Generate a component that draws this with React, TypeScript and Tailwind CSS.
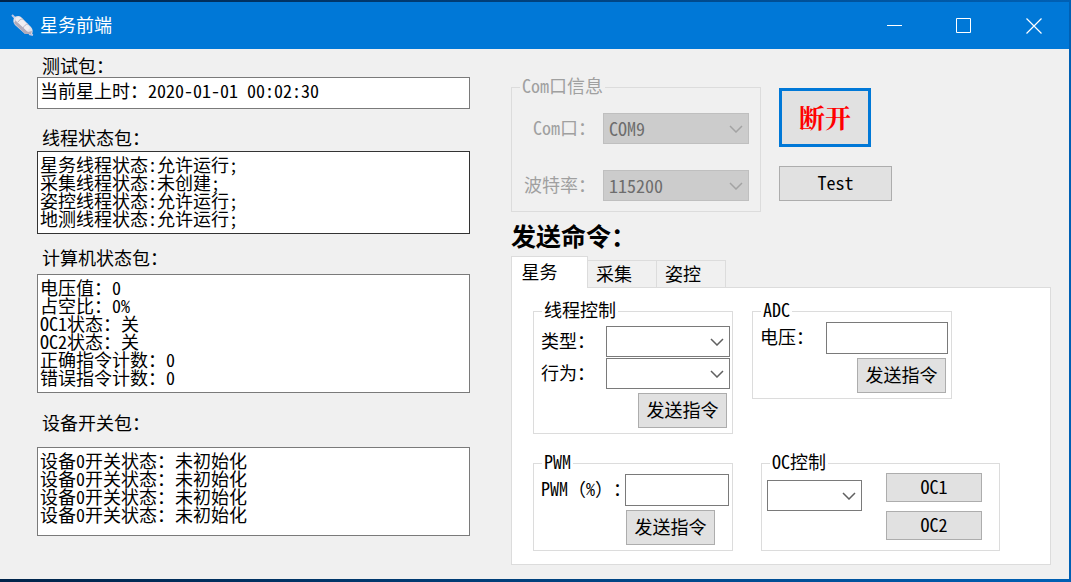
import { useState } from "react";
import type { ReactNode } from "react";

const threadStatus = [
  "星务线程状态:允许运行;",
  "采集线程状态:未创建;",
  "姿控线程状态:允许运行;",
  "地测线程状态:允许运行;",
].join("\n");

const computerStatus = [
  "电压值：0",
  "占空比：0%",
  "OC1状态：关",
  "OC2状态：关",
  "正确指令计数：0",
  "错误指令计数：0",
].join("\n");

const deviceStatus = Array(4).fill("设备0开关状态：未初始化").join("\n");

function AppIcon() {
  return (
    <svg viewBox="0 0 24 24" className="size-6" aria-hidden="true">
      <path d="m1 1 4 4M18 20l4 1" stroke="#b9c6e6" strokeWidth="2" />
      <path d="M3 4c1-2 5-3 7-1l10 10c2 2 2 5 1 7H14L4 11C2 9 2 6 3 4Z" fill="#e2e0e8" />
      <path d="M3 9 14 20h6l1-3-4 1L5 6Z" fill="#9c94a8" opacity=".7" />
      <path d="M5 4c1-1 3-1 5 0l9 10-3 3L5 7Z" fill="#efedf2" />
      <path d="M7 8c1-2 3-3 5-3M12 14c1-2 3-4 5-4" stroke="#b9b4c2" strokeWidth="1" fill="none" />
    </svg>
  );
}

function Combo({
  id,
  label,
  value,
  options = [],
  disabled,
  className,
}: {
  id: string;
  label?: string;
  value?: string;
  options?: string[];
  disabled?: boolean;
  className: string;
}) {
  return (
    <div className={"relative " + className}>
      <select
        id={id}
        aria-label={label}
        defaultValue={value ?? ""}
        disabled={disabled}
        className="block h-[31px] w-full appearance-none border border-[#7a7a7a] bg-white pr-6 pb-0.5 pl-[5px] text-[18px] leading-5 disabled:border-[#bfbfbf] disabled:bg-[#cccccc] disabled:text-[#6d6d6d] disabled:opacity-100"
      >
        {value === undefined && <option value="" />}
        {value !== undefined && <option>{value}</option>}
        {options.map((o) => (
          <option key={o}>{o}</option>
        ))}
      </select>
      <svg
        viewBox="0 0 14 8"
        className={
          "pointer-events-none absolute top-3 right-1.5 h-2 w-3.5 " +
          (disabled ? "text-[#a3a3a3]" : "text-[#606060]")
        }
        aria-hidden="true"
      >
        <path d="m1 1 6 6 6-6" fill="none" stroke="currentColor" strokeWidth="1.5" />
      </svg>
    </div>
  );
}

function Group({
  title,
  className,
  disabled,
  children,
}: {
  title: string;
  className: string;
  disabled?: boolean;
  children: ReactNode;
}) {
  return (
    <fieldset disabled={disabled} className={"border border-[#dcdcdc] " + className}>
      <legend className="ml-2 px-0.5 pb-1 leading-4">{title}</legend>
      {children}
    </fieldset>
  );
}

function PushButton({ className, children }: { className: string; children: ReactNode }) {
  return (
    <button type="button" className={"border border-[#adadad] bg-[#e1e1e1] pb-1 leading-5 " + className}>
      {children}
    </button>
  );
}

const boxClass =
  "block w-full resize-none overflow-hidden border bg-white px-0.5 leading-[18px] outline-none";
const captionClass = "block pb-0.5 pl-[5px] leading-[18px]";
const rowLabelClass = "pb-1 leading-5 whitespace-nowrap";
const fieldClass = "h-8 min-w-0 border border-[#7a7a7a] bg-white px-1 outline-none";

export default function App() {
  const tabs = ["星务", "采集", "姿控"];
  const [active, setActive] = useState(0);

  return (
    <div className="flex min-h-screen flex-col bg-linear-to-r from-[#00244a] to-[#0060b4] pt-0.5 pr-0.5 pb-[3px] font-['Noto_Sans_Mono_CJK_SC','Noto_Sans_CJK_SC',monospace] text-[18px] text-black [text-spacing-trim:space-all]">
      <header className="flex h-[47px] shrink-0 items-center bg-[#0078d7] pl-[11px] text-white">
        <AppIcon />
        <h1 className="ml-[5px] flex-1 pb-0.5 font-['Noto_Sans_CJK_SC',sans-serif] text-[18px] font-normal">星务前端</h1>
        <button type="button" aria-label="最小化" className="flex h-full w-[69px] items-center justify-center">
          <svg viewBox="0 0 16 16" className="size-4" aria-hidden="true">
            <path d="M0 7.5h15" stroke="currentColor" fill="none" />
          </svg>
        </button>
        <button type="button" aria-label="最大化" className="flex h-full w-[69px] items-center justify-center">
          <svg viewBox="0 0 16 16" className="size-4" aria-hidden="true">
            <path d="M.5.5h14v14H.5z" stroke="currentColor" fill="none" />
          </svg>
        </button>
        <button type="button" aria-label="关闭" className="flex h-full w-[71px] items-center justify-center">
          <svg viewBox="0 0 16 16" className="size-4" aria-hidden="true">
            <path d="m.5.5 15 15m0-15-15 15" stroke="currentColor" strokeWidth="1.2" fill="none" />
          </svg>
        </button>
      </header>

      <main className="grid flex-1 grid-cols-[433fr_540fr] gap-x-[41px] bg-[#f0f0f0] pr-[18px] pl-[37px]">
        <section className="pt-[7px]">
          <label htmlFor="test" className={captionClass}>测试包：</label>
          <input
            id="test"
            readOnly
            value="当前星上时：2020-01-01 00:02:30"
            className={boxClass + " mt-px h-8 border-[#7a7a7a] pb-1.5"}
          />
          <label htmlFor="threads" className={captionClass + " mt-[19px]"}>线程状态包：</label>
          <textarea
            id="threads"
            readOnly
            value={threadStatus}
            className={boxClass + " mt-[3px] h-[83px] border-[#333333] pt-[3px]"}
          />
          <label htmlFor="computer" className={captionClass + " mt-3.5"}>计算机状态包：</label>
          <textarea
            id="computer"
            readOnly
            value={computerStatus}
            className={boxClass + " mt-1.5 h-[119px] border-[#7a7a7a] pt-[3px]"}
          />
          <label htmlFor="devices" className={captionClass + " mt-5"}>设备开关包：</label>
          <textarea
            id="devices"
            readOnly
            value={deviceStatus}
            className={boxClass + " mt-3.5 h-[89px] border-[#7a7a7a] pt-[3px]"}
          />
        </section>

        <section className="flex flex-col pt-7">
          <div className="flex items-start">
            <Group title="Com口信息" disabled className="flex h-[135px] w-[250px] flex-col text-[#a0a0a0]">
              <div className="mt-4 flex items-center pr-[11px]">
                <label htmlFor="port" className={rowLabelClass + " w-[91px] pl-[21px]"}>Com口：</label>
                <Combo id="port" value="COM9" disabled className="flex-1" />
              </div>
              <div className="mt-[26px] flex items-center pr-[11px]">
                <label htmlFor="baud" className={rowLabelClass + " w-[91px] pl-3"}>波特率：</label>
                <Combo id="baud" value="115200" disabled className="flex-1" />
              </div>
            </Group>
            <div className="mt-[11px] ml-[18px] flex flex-col items-start gap-[19px]">
              <button
                type="button"
                className="h-[59px] w-[92px] border-3 border-[#0078d7] bg-[#e1e1e1] pb-0.5 font-['Noto_Serif_CJK_SC','Noto_Sans_CJK_SC',serif] text-[26px] leading-8 font-bold text-[#ff0000]"
              >
                断开
              </button>
              <PushButton className="h-[35px] w-[113px]">Test</PushButton>
            </div>
          </div>

          <h2 className="mt-[7px] pb-0.5 text-[25px] leading-8 font-bold">发送命令：</h2>

          <div role="tablist" className="mt-[3px] flex items-end">
            {tabs.map((t, i) => (
              <button
                key={t}
                type="button"
                role="tab"
                aria-selected={active === i}
                onClick={() => setActive(i)}
                className={
                  active === i
                    ? "z-10 -mb-px h-8 w-[77px] border border-b-0 border-[#dcdcdc] bg-white pr-5 pb-1 leading-5"
                    : "h-[27px] w-[69px] border border-b-0 border-l-0 border-[#dcdcdc] bg-[#f0f0f0] pr-4 pb-0.5 leading-5"
                }
              >
                {t}
              </button>
            ))}
          </div>

          <div role="tabpanel" className="h-[278px] border border-[#dcdcdc] bg-white pt-[13px] pl-[21px]">
            <div className="flex items-start gap-[19px]">
              <Group title="线程控制" className="h-[133px] w-[200px]">
                <div className="mt-[5px] flex items-center pl-[7px]">
                  <label htmlFor="kind" className={rowLabelClass + " w-[65px]"}>类型：</label>
                  <Combo id="kind" options={["星务", "采集", "姿控", "地测"]} className="w-[124px]" />
                </div>
                <div className="mt-px flex items-center pl-[7px]">
                  <label htmlFor="action" className={rowLabelClass + " w-[65px]"}>行为：</label>
                  <Combo id="action" options={["运行", "停止"]} className="w-[124px]" />
                </div>
                <div className="mt-1 flex justify-end pr-[5px]">
                  <PushButton className="h-[35px] w-[89px]">发送指令</PushButton>
                </div>
              </Group>
              <Group title="ADC" className="h-[98px] w-[200px]">
                <div className="mt-px flex items-center pl-[7px]">
                  <label htmlFor="voltage" className={rowLabelClass + " w-[66px]"}>电压：</label>
                  <input id="voltage" type="text" className={fieldClass + " w-[122px]"} />
                </div>
                <div className="mt-1 flex justify-end pr-[5px]">
                  <PushButton className="h-[35px] w-[89px]">发送指令</PushButton>
                </div>
              </Group>
            </div>

            <div className="mt-[19px] flex items-start gap-7">
              <Group title="PWM" className="h-[98px] w-[200px]">
                <div className="mt-px flex items-center pl-[7px]">
                  <label htmlFor="pwm" className={rowLabelClass + " w-[84px]"}>PWM（%）：</label>
                  <input id="pwm" type="text" className={fieldClass + " relative w-[104px]"} />
                </div>
                <div className="mt-1 pl-[92px]">
                  <PushButton className="h-[35px] w-[89px]">发送指令</PushButton>
                </div>
              </Group>
              <Group title="OC控制" className="h-[98px] w-[239px]">
                <div className="flex items-start gap-6 pl-[5px]">
                  <Combo id="oc" label="OC控制" options={["开", "关"]} className="mt-[7px] w-[95px]" />
                  <div className="flex flex-col gap-[9px]">
                    <PushButton className="h-[29px] w-24">OC1</PushButton>
                    <PushButton className="h-[29px] w-24">OC2</PushButton>
                  </div>
                </div>
              </Group>
            </div>
          </div>
        </section>
      </main>
    </div>
  );
}
